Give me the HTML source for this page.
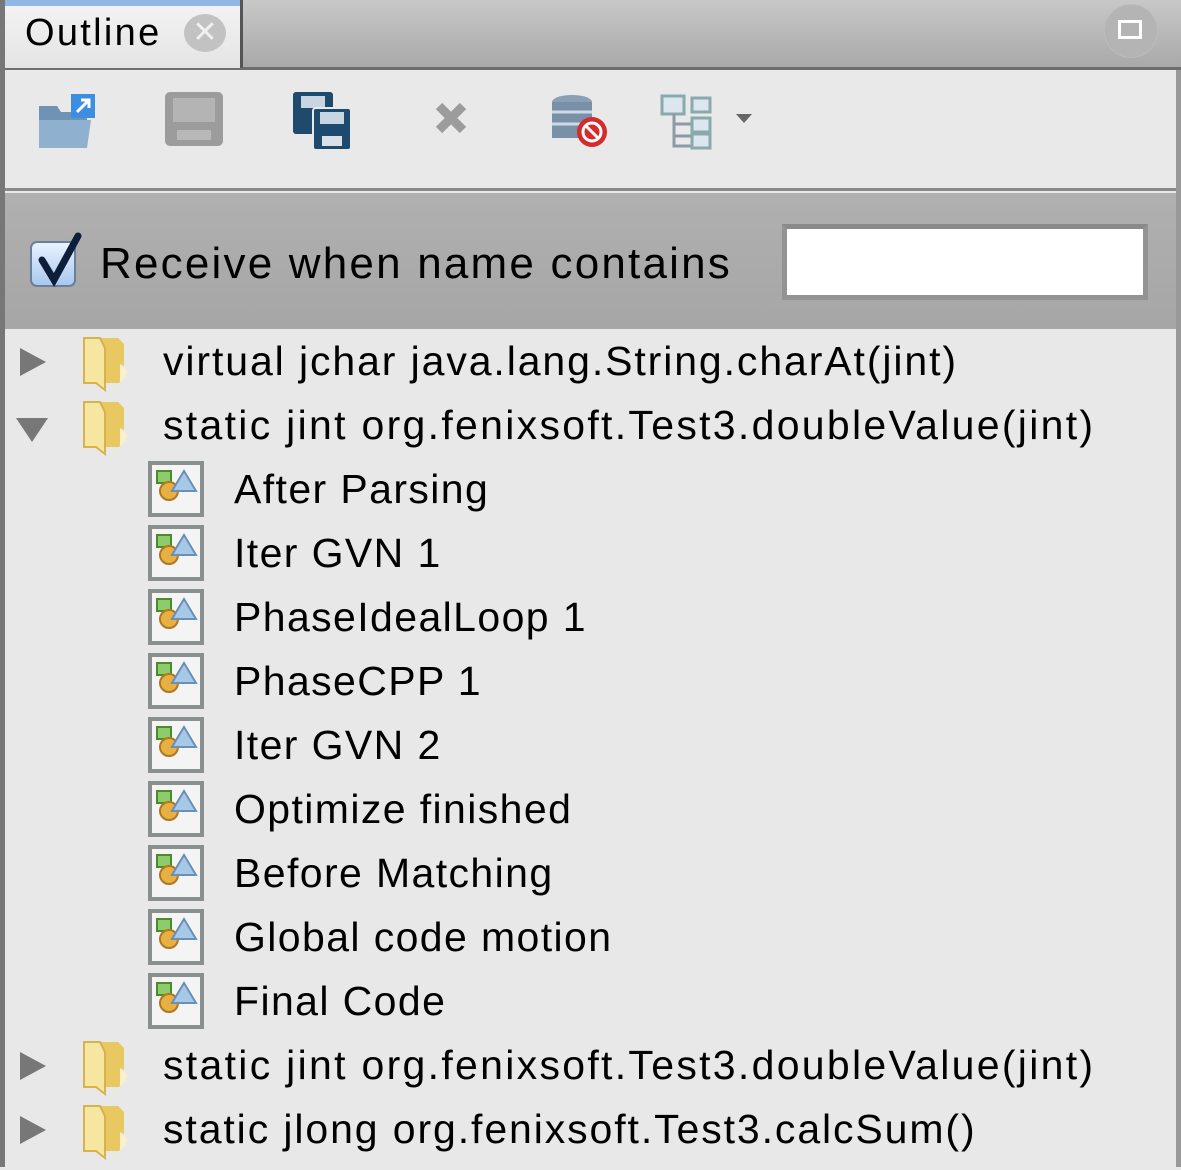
<!DOCTYPE html>
<html><head><meta charset="utf-8"><style>
*{margin:0;padding:0;box-sizing:border-box}
body{width:1181px;height:1167px;overflow:hidden;background:#e8e8e8;font-family:"Liberation Sans",sans-serif;position:relative}
.hdr{position:absolute;left:0;top:0;width:1181px;height:70px;background:linear-gradient(#c8c8c8,#a9a9a9);border-bottom:3px solid #6e6e6e}
.tab{position:absolute;left:4px;top:0;width:239px;height:68px;background:linear-gradient(#f4f4f4,#e4e4e4);border-right:3px solid #555}
.tab .bar{position:absolute;left:0;top:0;width:100%;height:6px;background:#8fb8e6}
.tab span{position:absolute;left:21px;top:12px;font-size:38px;color:#000;letter-spacing:2.3px}
.xc{position:absolute;left:180px;top:14px;width:42px;height:38px;border-radius:50%;background:#c2c2c2;color:#f0f0f0;font-size:30px;text-align:center;line-height:38px}
.max{position:absolute;left:1104px;top:4px;width:54px;height:54px;border-radius:50%;background:#b4b4b4;border:1px solid #bcbcbc}
.max:after{content:"";position:absolute;left:13px;top:15px;width:24px;height:19px;border:3px solid #fff;box-sizing:border-box}
.lb{position:absolute;left:0;top:0;width:5px;height:1167px;background:#777}
.rb{position:absolute;right:0;top:70px;width:5px;height:1097px;background:#999}
.tb{position:absolute;left:5px;top:70px;width:1171px;height:121px;background:#e9e9e9;border-bottom:3px solid #8a8a8a}
.filt{position:absolute;left:5px;top:193px;width:1171px;height:136px;background:linear-gradient(#b0b0b0,#a6a6a6)}
.cb{position:absolute;left:30px;top:241px;width:46px;height:46px;border-radius:7px;background:linear-gradient(#e8f2ff,#a9c9ee);border:2px solid #6b7f99}
.lbl{position:absolute;left:100px;top:239px;font-size:44px;color:#000;letter-spacing:2.2px}
.inp{position:absolute;left:782px;top:224px;width:366px;height:76px;background:#fff;border:5px solid #939393;border-top-color:#8a8a8a}
.row{position:absolute;height:64px;font-size:41px;color:#000;white-space:nowrap;letter-spacing:1.9px}
.row.w{letter-spacing:2.3px}
.row.s{letter-spacing:1.4px}
.ic{position:absolute;width:56px;height:56px;background:#f4f4f4;border:4px solid #8a9090}
</style></head><body>
<div class="hdr"></div>
<div class="tab"><div class="bar"></div><span>Outline</span><div class="xc">✕</div></div>
<div class="max"></div>
<div class="tb">
<svg width="760" height="110" style="position:absolute;left:0;top:0">
 <g transform="translate(32,22)"><path d="M2 14h18l4 6h26v36H2z" fill="#6e93b5"/><path d="M2 28h52l-4 28H2z" fill="#8fb0cf"/><rect x="34" y="2" width="24" height="24" fill="#3c8fe0"/><path d="M40 20l12-12M44 8h8v8" stroke="#fff" stroke-width="3" fill="none"/></g>
 <g transform="translate(160,22)"><rect x="0" y="0" width="58" height="54" rx="5" fill="#9c9c9c"/><rect x="8" y="6" width="42" height="24" fill="#b4b4b4"/><rect x="12" y="38" width="34" height="10" fill="#b8b8b8"/></g>
 <g transform="translate(288,22)"><rect x="0" y="0" width="40" height="42" rx="3" fill="#1e4a6e"/><rect x="8" y="4" width="24" height="12" fill="#c8d6e4"/><rect x="20" y="16" width="38" height="42" rx="3" fill="#1e4a6e" stroke="#e9e9e9" stroke-width="2"/><rect x="27" y="20" width="24" height="12" fill="#c8d6e4"/><rect x="29" y="44" width="20" height="10" fill="#d8e0e8"/></g>
 <g transform="translate(430,32)"><path d="M4 4l24 24M28 4L4 28" stroke="#9c9c9c" stroke-width="9"/></g>
 <g transform="translate(545,24)"><ellipse cx="22" cy="8" rx="20" ry="7" fill="#8aa0b5"/><rect x="2" y="8" width="40" height="36" fill="#7890a8"/><path d="M2 18h40M2 30h40" stroke="#d0dae4" stroke-width="3"/><circle cx="42" cy="38" r="15" fill="#d42b2b"/><circle cx="42" cy="38" r="9" fill="none" stroke="#fff" stroke-width="3"/><path d="M36 32l12 12" stroke="#fff" stroke-width="3"/></g>
 <g transform="translate(655,24)"><rect x="2" y="2" width="22" height="18" fill="#dce6f0" stroke="#8aa" stroke-width="3"/><path d="M14 20v32h20M14 30h20M14 42h20" stroke="#8a9aa8" stroke-width="3" fill="none"/><rect x="32" y="4" width="18" height="14" fill="#dce6f0" stroke="#8aa" stroke-width="3"/><rect x="32" y="24" width="18" height="14" fill="#dce6f0" stroke="#8aa" stroke-width="3"/><rect x="32" y="40" width="18" height="14" fill="#dce6f0" stroke="#8aa" stroke-width="3"/><path d="M76 20h16l-8 9z" fill="#666"/></g>
</svg>
</div>
<div class="filt"></div>
<div class="cb"></div>
<svg width="60" height="60" style="position:absolute;left:36px;top:230px"><path d="M6 30l12 20L42 6" stroke="#0c1e3a" stroke-width="7" fill="none" stroke-linecap="round"/></svg>
<div class="lbl">Receive when name contains</div>
<div class="inp"></div>

<div id="tree"></div>
<script>
var rows=[
[0,'r','virtual jchar java.lang.String.charAt(jint)',''],
[0,'d','static jint org.fenixsoft.Test3.doubleValue(jint)','w'],
[1,'','After Parsing'],[1,'','Iter GVN 1'],[1,'','PhaseIdealLoop 1'],[1,'','PhaseCPP 1'],[1,'','Iter GVN 2'],[1,'','Optimize finished'],[1,'','Before Matching'],[1,'','Global code motion'],[1,'','Final Code'],
[0,'r','static jint org.fenixsoft.Test3.doubleValue(jint)','w'],
[0,'r','static jlong org.fenixsoft.Test3.calcSum()','']];
var h='';
rows.forEach(function(r,i){
 var cy=362+i*64;
 if(r[0]==0){
  if(r[1]=='r') h+='<svg style="position:absolute;left:18px;top:'+(cy-16)+'px" width="30" height="32"><path d="M2 2L28 16L2 30z" fill="#777"/></svg>';
  else h+='<svg style="position:absolute;left:14px;top:'+(cy-10)+'px" width="36" height="28"><path d="M2 2H34L18 26z" fill="#777"/></svg>';
  h+='<svg style="position:absolute;left:80px;top:'+(cy-28)+'px" width="54" height="60"><path d="M4 4h34l6 6v34l-5 5H4z" fill="#e8c860"/><path d="M4 4h16l5 10v42l-9-7H4z" fill="#f6e6a0" stroke="#d4b350" stroke-width="2"/><path d="M40 30q14 7 0 18z" fill="#f8f0d0"/></svg>';
  h+='<div class="row '+r[3]+'" style="left:163px;top:'+(cy-24)+'px">'+r[2]+'</div>';
 }else{
  h+='<div class="ic" style="left:148px;top:'+(cy-29)+'px"><svg width="48" height="48"><rect x="5" y="6" width="14" height="12" fill="#8ccc6a" stroke="#4a8a30" stroke-width="2"/><circle cx="17" cy="26" r="9" fill="#e8b040" stroke="#b07820" stroke-width="2"/><path d="M32 6l12 20H20z" fill="#a8c8e8" stroke="#6890b8" stroke-width="2"/></svg></div>';
  h+='<div class="row s" style="left:234px;top:'+(cy-24)+'px">'+r[2]+'</div>';
 }
});
document.getElementById('tree').innerHTML=h;
</script>
<div class="lb"></div><div class="rb"></div>
</body></html>
